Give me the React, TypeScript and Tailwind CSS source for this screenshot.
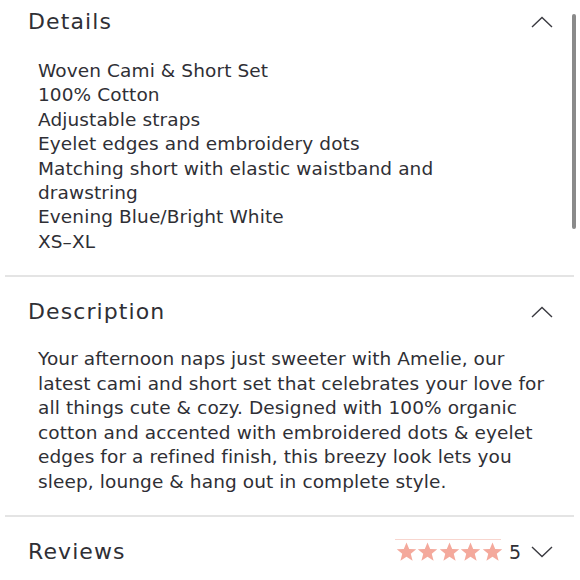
import React from "react";

const font = { fontFamily: '"DejaVu Sans", sans-serif' };

function Chevron({ up }: { up: boolean }) {
  return (
    <svg width="22" height="12" viewBox="0 0 22 12" className="block">
      <polyline
        points={up ? "1,11 11,1.5 21,11" : "1,1 11,10.5 21,1"}
        fill="none"
        stroke="#3a3a40"
        strokeWidth="1.4"
        strokeLinejoin="miter"
      />
    </svg>
  );
}

function Star() {
  return (
    <svg width="21" height="20" viewBox="0 0 24 23" className="block">
      <polygon
        points="12,0.5 15.1,8 23.2,8.4 16.9,13.5 19,21.5 12,17 5,21.5 7.1,13.5 0.8,8.4 8.9,8"
        fill="#f4a99c"
      />
    </svg>
  );
}

const details = [
  "Woven Cami & Short Set",
  "100% Cotton",
  "Adjustable straps",
  "Eyelet edges and embroidery dots",
  "Matching short with elastic waistband and",
  "drawstring",
  "Evening Blue/Bright White",
  "XS–XL",
];

const desc = [
  "Your afternoon naps just sweeter with Amelie, our",
  "latest cami and short set that celebrates your love for",
  "all things cute & cozy. Designed with 100% organic",
  "cotton and accented with embroidered dots & eyelet",
  "edges for a refined finish, this breezy look lets you",
  "sleep, lounge & hang out in complete style.",
];

export default function App() {
  return (
    <div className="relative w-[580px] h-[580px] overflow-hidden bg-white text-[#2f2f35]" style={font}>
      <div className="absolute left-[572px] top-[14px] w-[4px] h-[215px] rounded-full bg-[#8a8a8a]" />

      <div className="flex items-center justify-between h-[44px] pl-[28px] pr-[27px]">
        <span className="text-[22px] leading-none tracking-[1.1px]">Details</span>
        <Chevron up />
      </div>
      <div className="pl-[38px] pt-[15px] text-[18.5px] leading-[24.4px] tracking-[0.1px]">
        {details.map((l) => (
          <div key={l} className="whitespace-nowrap">{l}</div>
        ))}
      </div>
      <div className="mt-[21px] ml-[5px] mr-[6px] h-[2px] bg-[#e4e4e4]" />

      <div className="flex items-center justify-between h-[70px] pl-[28px] pr-[27px]">
        <span className="text-[22px] leading-none tracking-[1.1px]">Description</span>
        <Chevron up />
      </div>
      <div className="pl-[38px] text-[18.5px] leading-[24.5px] tracking-[0.1px]">
        {desc.map((l) => (
          <div key={l} className="whitespace-nowrap">{l}</div>
        ))}
      </div>
      <div className="mt-[21px] ml-[5px] mr-[6px] h-[2px] bg-[#e4e4e4]" />

      <div className="flex items-center justify-between h-[70px] pl-[28px] pr-[27px]">
        <span className="text-[22px] leading-none tracking-[1.1px]">Reviews</span>
        <div className="flex items-center">
          <div className="relative flex gap-[0.5px]">
            <div className="absolute left-[-1px] right-[2px] top-[-3px] h-[1px] bg-[#f8d6cf]" />
            <Star />
            <Star />
            <Star />
            <Star />
            <Star />
          </div>
          <span className="ml-[6px] mr-[10px] text-[19px] leading-none">5</span>
          <Chevron up={false} />
        </div>
      </div>
    </div>
  );
}
